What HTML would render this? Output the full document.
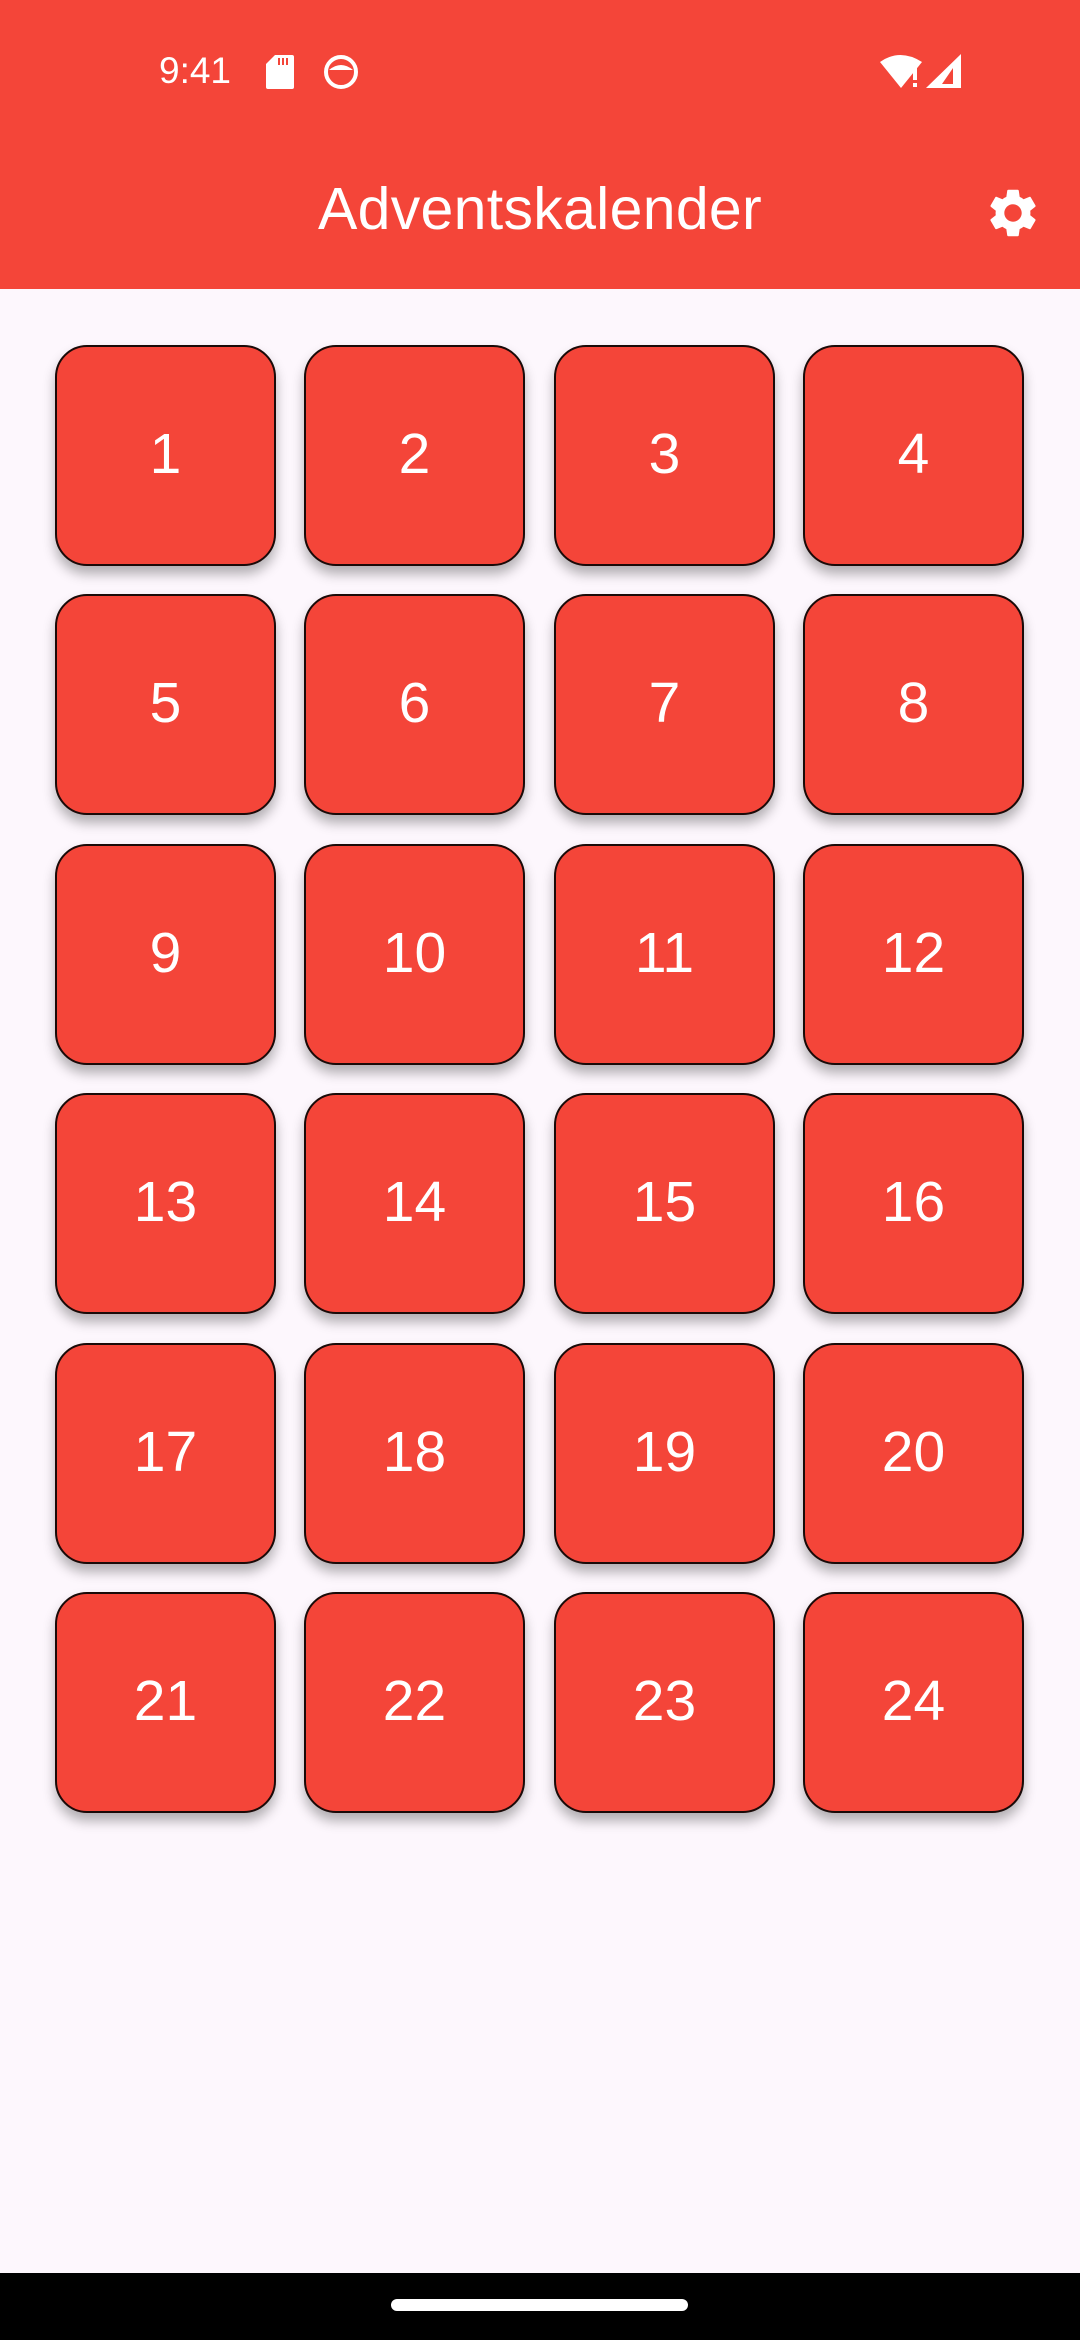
<!DOCTYPE html>
<html><head><meta charset="utf-8"><style>
*{margin:0;padding:0;box-sizing:border-box}
body{width:1080px;height:2340px;background:#fdf7fd;font-family:"Liberation Sans",sans-serif;position:relative;overflow:hidden}
.bar{position:absolute;left:0;top:0;width:1080px;height:289px;background:#f44539}
.time{position:absolute;left:159px;top:50px;color:#fff;font-size:37px}
.title{position:absolute;left:0;width:1080px;top:175px;text-align:center;color:#fff;font-size:59px;letter-spacing:0.3px}
.grid{position:absolute;left:55px;top:345px}
.c{position:absolute;width:221px;height:221px;background:#f44539;border:2.5px solid #1a0a08;border-radius:32px;box-shadow:0 8px 12px rgba(0,0,0,.3);color:#fff;font-size:57px;display:flex;align-items:center;justify-content:center;padding-bottom:3px}
.nav{position:absolute;left:0;top:2273px;width:1080px;height:67px;background:#000}
.handle{position:absolute;left:391px;top:2299px;width:297px;height:12px;border-radius:6px;background:#fff}
</style></head><body>
<div class="bar"></div>
<div class="time">9:41</div>
<svg style="position:absolute;left:266px;top:55px" width="28" height="34" viewBox="0 0 28 34"><path d="M9 0H26a2 2 0 0 1 2 2V32a2 2 0 0 1-2 2H2a2 2 0 0 1-2-2V9z" fill="#fff"/><path d="M13 3v7M17 3v7M21 3v7" stroke="#f44539" stroke-width="2"/></svg>
<svg style="position:absolute;left:323px;top:54px" width="36" height="36" viewBox="0 0 36 36"><circle cx="18" cy="18" r="15" fill="none" stroke="#fff" stroke-width="4"/><path d="M6 16q12-10 24 0" fill="#fff"/></svg>
<svg style="position:absolute;left:880px;top:54px" width="84" height="36" viewBox="0 0 84 36"><path d="M0 8Q20-6 42 8L21 34z" fill="#fff"/><rect x="33" y="14" width="4" height="12" fill="#fff"/><rect x="33" y="29" width="4" height="4" fill="#fff"/><path d="M81 0V34H46z" fill="#fff"/><path d="M73 14V30H62z" fill="#f44539"/></svg>
<div class="title">Adventskalender</div>
<svg style="position:absolute;left:984px;top:184px" width="58" height="58" viewBox="0 0 24 24"><path fill="#fff" d="M19.14 12.94c.04-.3.06-.61.06-.94 0-.32-.02-.64-.07-.94l2.030-1.58a.49.49 0 0 0 .12-.61l-1.92-3.32a.488.488 0 0 0-.59-.22l-2.39.96c-.5-.38-1.03-.7-1.620-.94l-.36-2.54a.484.484 0 0 0-.48-.41h-3.84c-.24 0-.43.17-.47.41l-.36 2.54c-.59.24-1.13.57-1.62.94l-2.39-.96c-.22-.08-.47 0-.59.22L2.74 8.87c-.12.21-.08.47.12.61l2.03 1.58c-.05.3-.09.63-.09.94s.02.64.07.94l-2.03 1.58a.49.49 0 0 0-.12.61l1.92 3.32c.12.22.37.29.59.22l2.39-.96c.5.38 1.03.7 1.62.94l.36 2.54c.05.24.24.41.48.41h3.84c.24 0 .44-.17.47-.41l.36-2.54c.59-.24 1.13-.56 1.62-.94l2.39.96c.22.08.47 0 .59-.22l1.92-3.32c.12-.22.07-.47-.12-.61l-2.01-1.58zM12 15.6c-1.98 0-3.6-1.62-3.6-3.6s1.62-3.6 3.6-3.6 3.6 1.62 3.6 3.6-1.62 3.6-3.6 3.6z"/></svg>
<div class="grid">
<div class="c" style="left:0;top:0">1</div><div class="c" style="left:249px;top:0">2</div><div class="c" style="left:499px;top:0">3</div><div class="c" style="left:748px;top:0">4</div>
<div class="c" style="left:0;top:249px">5</div><div class="c" style="left:249px;top:249px">6</div><div class="c" style="left:499px;top:249px">7</div><div class="c" style="left:748px;top:249px">8</div>
<div class="c" style="left:0;top:499px">9</div><div class="c" style="left:249px;top:499px">10</div><div class="c" style="left:499px;top:499px">11</div><div class="c" style="left:748px;top:499px">12</div>
<div class="c" style="left:0;top:748px">13</div><div class="c" style="left:249px;top:748px">14</div><div class="c" style="left:499px;top:748px">15</div><div class="c" style="left:748px;top:748px">16</div>
<div class="c" style="left:0;top:998px">17</div><div class="c" style="left:249px;top:998px">18</div><div class="c" style="left:499px;top:998px">19</div><div class="c" style="left:748px;top:998px">20</div>
<div class="c" style="left:0;top:1247px">21</div><div class="c" style="left:249px;top:1247px">22</div><div class="c" style="left:499px;top:1247px">23</div><div class="c" style="left:748px;top:1247px">24</div>
</div>
<div class="nav"></div>
<div class="handle"></div>
</body></html>
